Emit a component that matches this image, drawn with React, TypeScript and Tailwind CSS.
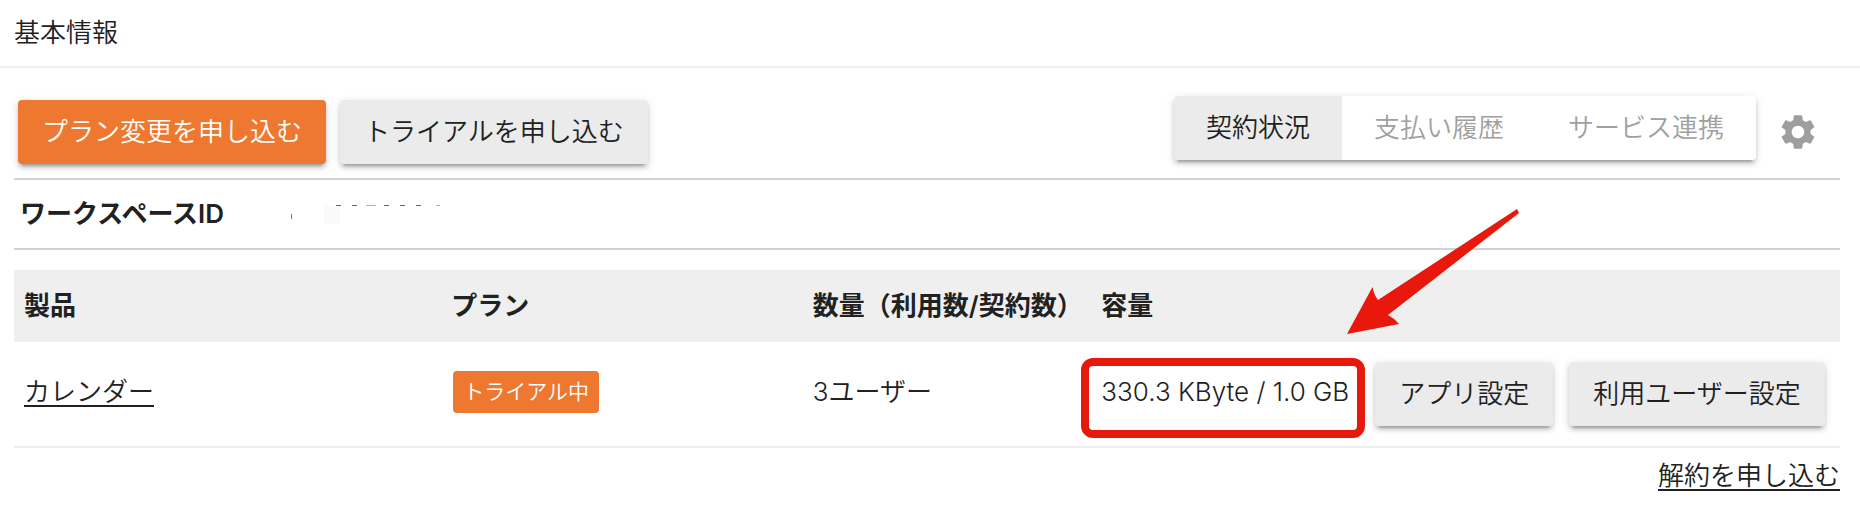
import React, { useState } from 'react';
import { MdSettings } from 'react-icons/md';

const TABS = ['契約状況', '支払い履歴', 'サービス連携'];

const RAISED =
  'shadow-[0_6px_2px_-4px_rgba(0,0,0,0.2),0_4px_4px_0_rgba(0,0,0,0.14),0_2px_10px_0_rgba(0,0,0,0.12)]';

type ActionButtonProps = {
  primary?: boolean;
  children: React.ReactNode;
};

const ActionButton: React.FC<ActionButtonProps> = ({ primary, children }) => (
  <button
    type="button"
    className={`h-16 rounded px-6 whitespace-nowrap ${RAISED} ${
      primary ? 'bg-[#ef7830] text-white' : 'bg-[#ebebeb] text-[#212121]'
    }`}
  >
    {children}
  </button>
);

// What is left visible of the redacted workspace id
const MaskedId: React.FC = () => (
  <svg className="h-6 w-[152px]" viewBox="0 0 152 24" role="img" aria-label="非表示">
    <rect x="34" y="4" width="16" height="18" fill="#fafafa" />
    <rect x="1" y="12" width="1" height="5" fill="#777" />
    <g fill="#666">
      <rect x="46" y="3" width="5" height="1" />
      <rect x="62" y="3" width="5" height="1" />
      <rect x="76" y="3" width="10" height="1" fill="#b5b5b5" />
      <rect x="94" y="3" width="5" height="1" />
      <rect x="110" y="3" width="5" height="1" />
      <rect x="126" y="3" width="5" height="1" />
      <rect x="146" y="3" width="4" height="1" fill="#aaa" />
    </g>
  </svg>
);

const App: React.FC = () => {
  const [activeTab, setActiveTab] = useState(0);

  return (
    <div className="bg-white font-['Inter','Noto_Sans_CJK_JP',sans-serif] text-[26px] leading-10 font-[350] text-[#212121]">
      <header className="border-b-2 border-[#eeeeee] px-3.5 py-[13px]">
        <h1>基本情報</h1>
      </header>

      <main className="pr-5 pl-3.5">
        <div className="flex items-center justify-between pt-7 pb-2.5">
          <div className="ml-1 flex gap-3.5">
            <ActionButton primary>プラン変更を申し込む</ActionButton>
            <ActionButton>トライアルを申し込む</ActionButton>
          </div>

          <div className="flex">
            <div className={`mb-2 flex overflow-hidden rounded ${RAISED}`}>
              {TABS.map((tab, index) => (
                <button
                  key={tab}
                  type="button"
                  aria-pressed={index === activeTab}
                  onClick={() => setActiveTab(index)}
                  className={`h-16 px-8 whitespace-nowrap ${
                    index === activeTab ? 'bg-[#ebebeb]' : 'bg-white text-[#a0a0a0]'
                  }`}
                >
                  {tab}
                </button>
              ))}
            </div>
            <button
              type="button"
              aria-label="設定"
              className="flex h-[72px] w-[84px] items-center justify-center text-[#9e9e9e]"
            >
              <MdSettings className="size-[42px]" />
            </button>
          </div>
        </div>

        <dl className="flex h-[72px] items-center border-y-2 border-[#d2d2d2] pl-1.5">
          <dt className="w-[270px] font-semibold">ワークスペースID</dt>
          <dd>
            <MaskedId />
          </dd>
        </dl>

        <table className="mt-5 w-full table-fixed text-left whitespace-nowrap">
          <colgroup>
            <col className="w-[23.4%]" />
            <col className="w-[19.8%]" />
            <col className="w-[15.8%]" />
            <col className="w-[15%]" />
            <col className="w-[26%]" />
          </colgroup>
          <thead>
            <tr className="h-[72px] bg-[#efefef]">
              <th className="px-2.5 font-semibold">製品</th>
              <th className="px-2.5 font-semibold">プラン</th>
              <th className="px-2.5 font-semibold">数量（利用数/契約数）</th>
              <th className="px-2.5 font-semibold">容量</th>
              <td />
            </tr>
          </thead>
          <tbody>
            <tr className="h-[105px] border-b-2 border-[#eeeeee]">
              <td className="px-2.5 pb-1">
                <a href="#calendar" className="underline decoration-2 underline-offset-4">
                  カレンダー
                </a>
              </td>
              <td className="px-3 pb-1">
                <span className="flex h-[42px] w-fit items-center rounded bg-[#ef7830] px-2.5 text-[21px] text-white">
                  トライアル中
                </span>
              </td>
              <td className="px-2.5 pb-1">3ユーザー</td>
              <td className="relative px-2.5 pb-1">
                330.3 KByte / 1.0 GB
                {/* callout round the capacity */}
                <span className="pointer-events-none absolute top-4 right-0 -left-2.5 h-20 rounded-xl border-8 border-[#e8190c]" />
                <svg
                  className="pointer-events-none absolute -top-[135px] left-[254px] h-[129px] w-44"
                  viewBox="0 0 176 129"
                  fill="#e8190c"
                  aria-hidden="true"
                >
                  <path d="M2 127 27.5 80Q29 88 33 93L172 2L174 6L43 108Q49 111 54 117Z" />
                </svg>
              </td>
              <td className="px-2.5">
                <div className="flex gap-4">
                  <ActionButton>アプリ設定</ActionButton>
                  <ActionButton>利用ユーザー設定</ActionButton>
                </div>
              </td>
            </tr>
          </tbody>
        </table>

        <div className="mt-2 text-right">
          <a href="#cancel" className="underline decoration-2 underline-offset-4">
            解約を申し込む
          </a>
        </div>
      </main>
    </div>
  );
};

export default App;
